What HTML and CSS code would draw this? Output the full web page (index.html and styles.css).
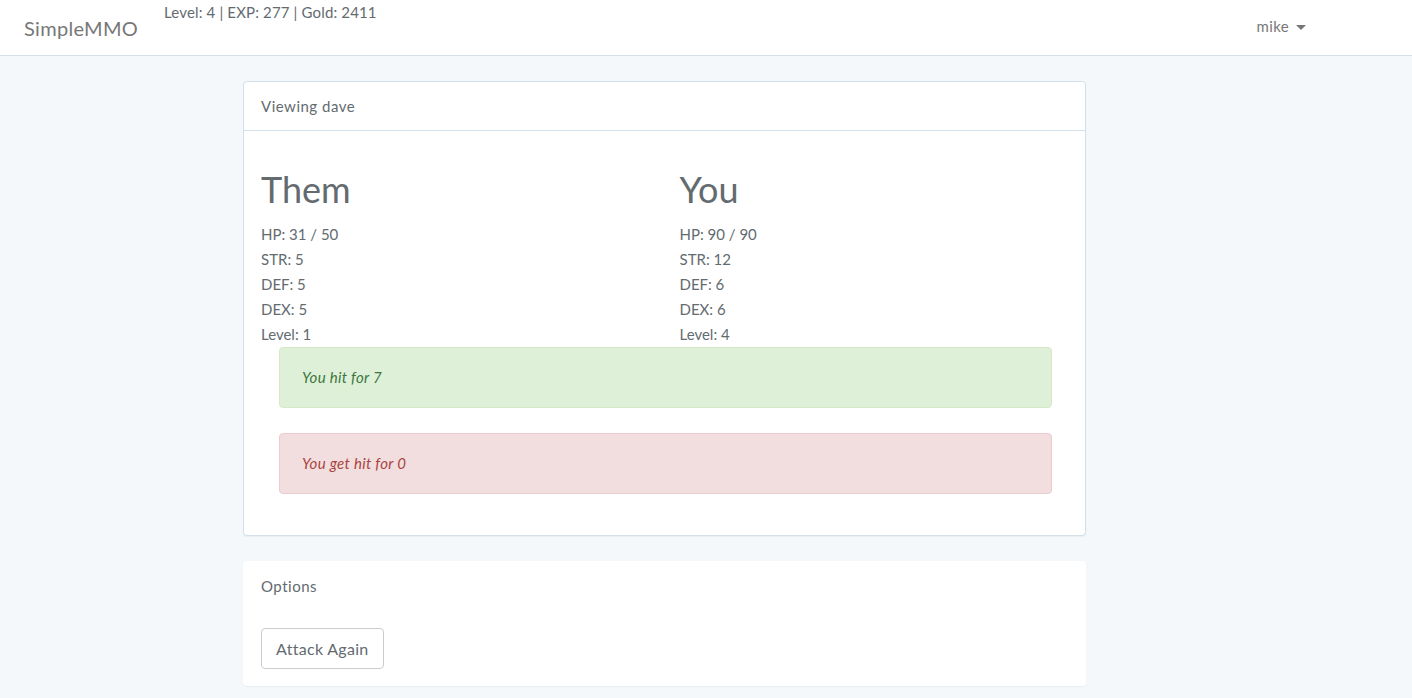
FILE: index.html
```html
<!DOCTYPE html>
<html lang="en">
<head>
  <meta charset="UTF-8">
  <meta name="viewport" content="width=device-width, initial-scale=1">
  <title>SimpleMMO</title>
  <link rel="stylesheet" href="styles.css">
</head>
<body>

<header class="navbar">
  <a class="brand" href="#">SimpleMMO</a>
  <div class="player-stats">Level: 4 | EXP: 277 | Gold: 2411</div>
  <div class="user">mike <span class="caret"></span></div>
</header>

<div class="container">
  <div class="panel panel-default">
    <div class="panel-heading">Viewing dave</div>
    <div class="panel-body">
      <div class="row">
        <div class="col">
          <h1>Them</h1>
          <div class="stat">HP: 31 / 50</div>
          <div class="stat">STR: 5</div>
          <div class="stat">DEF: 5</div>
          <div class="stat">DEX: 5</div>
          <div class="stat">Level: 1</div>
        </div>
        <div class="col">
          <h1>You</h1>
          <div class="stat">HP: 90 / 90</div>
          <div class="stat">STR: 12</div>
          <div class="stat">DEF: 6</div>
          <div class="stat">DEX: 6</div>
          <div class="stat">Level: 4</div>
        </div>
      </div>

      <div class="alert alert-success"><em>You hit for 7</em></div>
      <div class="alert alert-danger"><em>You get hit for 0</em></div>
    </div>
  </div>

  <div class="panel">
    <div class="panel-heading">Options</div>
    <div class="panel-body">
      <button class="btn">Attack Again</button>
    </div>
  </div>
</div>

</body>
</html>
```

FILE: styles.css
```css
/* Base */
body {
  font-family: Lato, "Open Sans", sans-serif;
  font-size: 15px;
  line-height: 1.6;
  margin: 0;
  padding: 0;
  background-color: #f5f8fa;
  color: #636b6f;
}

/* Navbar */
.navbar {
  display: flex;
  height: 55px;
  background-color: #fff;
  border-bottom: 1px solid #d3e0e9;
}

.brand {
  align-self: center;
  padding-left: 24px;
  font-size: 20px;
  letter-spacing: 0.3px;
  color: #777;
  text-decoration: none;
}

.player-stats {
  margin-left: 26px;
  margin-top: 1px;
  font-size: 15px;
  line-height: 22px;
  letter-spacing: 0.15px;
}

.user {
  align-self: center;
  margin-left: auto;
  margin-right: 106px;
  margin-bottom: 4px;
  color: #777;
  font-size: 15px;
  letter-spacing: 0.3px;
}

.caret {
  display: inline-block;
  width: 0;
  height: 0;
  margin-left: 3px;
  vertical-align: middle;
  border-top: 5px solid #777;
  border-left: 5px solid transparent;
  border-right: 5px solid transparent;
}

/* Layout */
.container {
  width: 843px;
  margin: 25px 0 0 243px;
}

.panel {
  background-color: #fff;
  border: 1px solid transparent;
  border-radius: 4px;
  margin-bottom: 25px;
  box-shadow: 0 1px 1px rgba(0, 0, 0, 0.05);
}

.panel-default {
  border-color: #d3e0e9;
}

.panel-heading {
  height: 48px;
  line-height: 48px;
  padding: 0 17px;
  letter-spacing: 0.5px;
  border-bottom: 1px solid transparent;
}

.panel-default .panel-heading {
  border-bottom-color: #d3e0e9;
}

.panel-body {
  padding: 15px 17px 16px;
}

.row {
  display: flex;
  gap: 30px;
}

.col {
  flex: 1;
}

h1 {
  font-size: 36px;
  font-weight: 400;
  line-height: 1.1;
  margin: 24px 0 12px;
}

.stat {
  line-height: 25px;
}

/* Alerts */
.alert {
  margin: 0 16px 25px 18px;
  padding: 18px 22px;
  border: 1px solid transparent;
  border-radius: 4px;
  line-height: 23px;
  letter-spacing: 0.3px;
}

.alert-success {
  background-color: #dff0d8;
  border-color: #d6e9c6;
  color: #3c763d;
}

.alert-danger {
  background-color: #f2dede;
  border-color: #ebccd1;
  color: #a94442;
}

/* Buttons */
.btn {
  font-family: inherit;
  font-size: 16px;
  line-height: 21px;
  letter-spacing: 0.3px;
  padding: 9px 14px;
  margin-top: 2px;
  color: #636b6f;
  background-color: #fff;
  border: 1px solid #ccc;
  border-radius: 4px;
  cursor: pointer;
}

.btn:hover {
  background-color: #e6e6e6;
}
```
